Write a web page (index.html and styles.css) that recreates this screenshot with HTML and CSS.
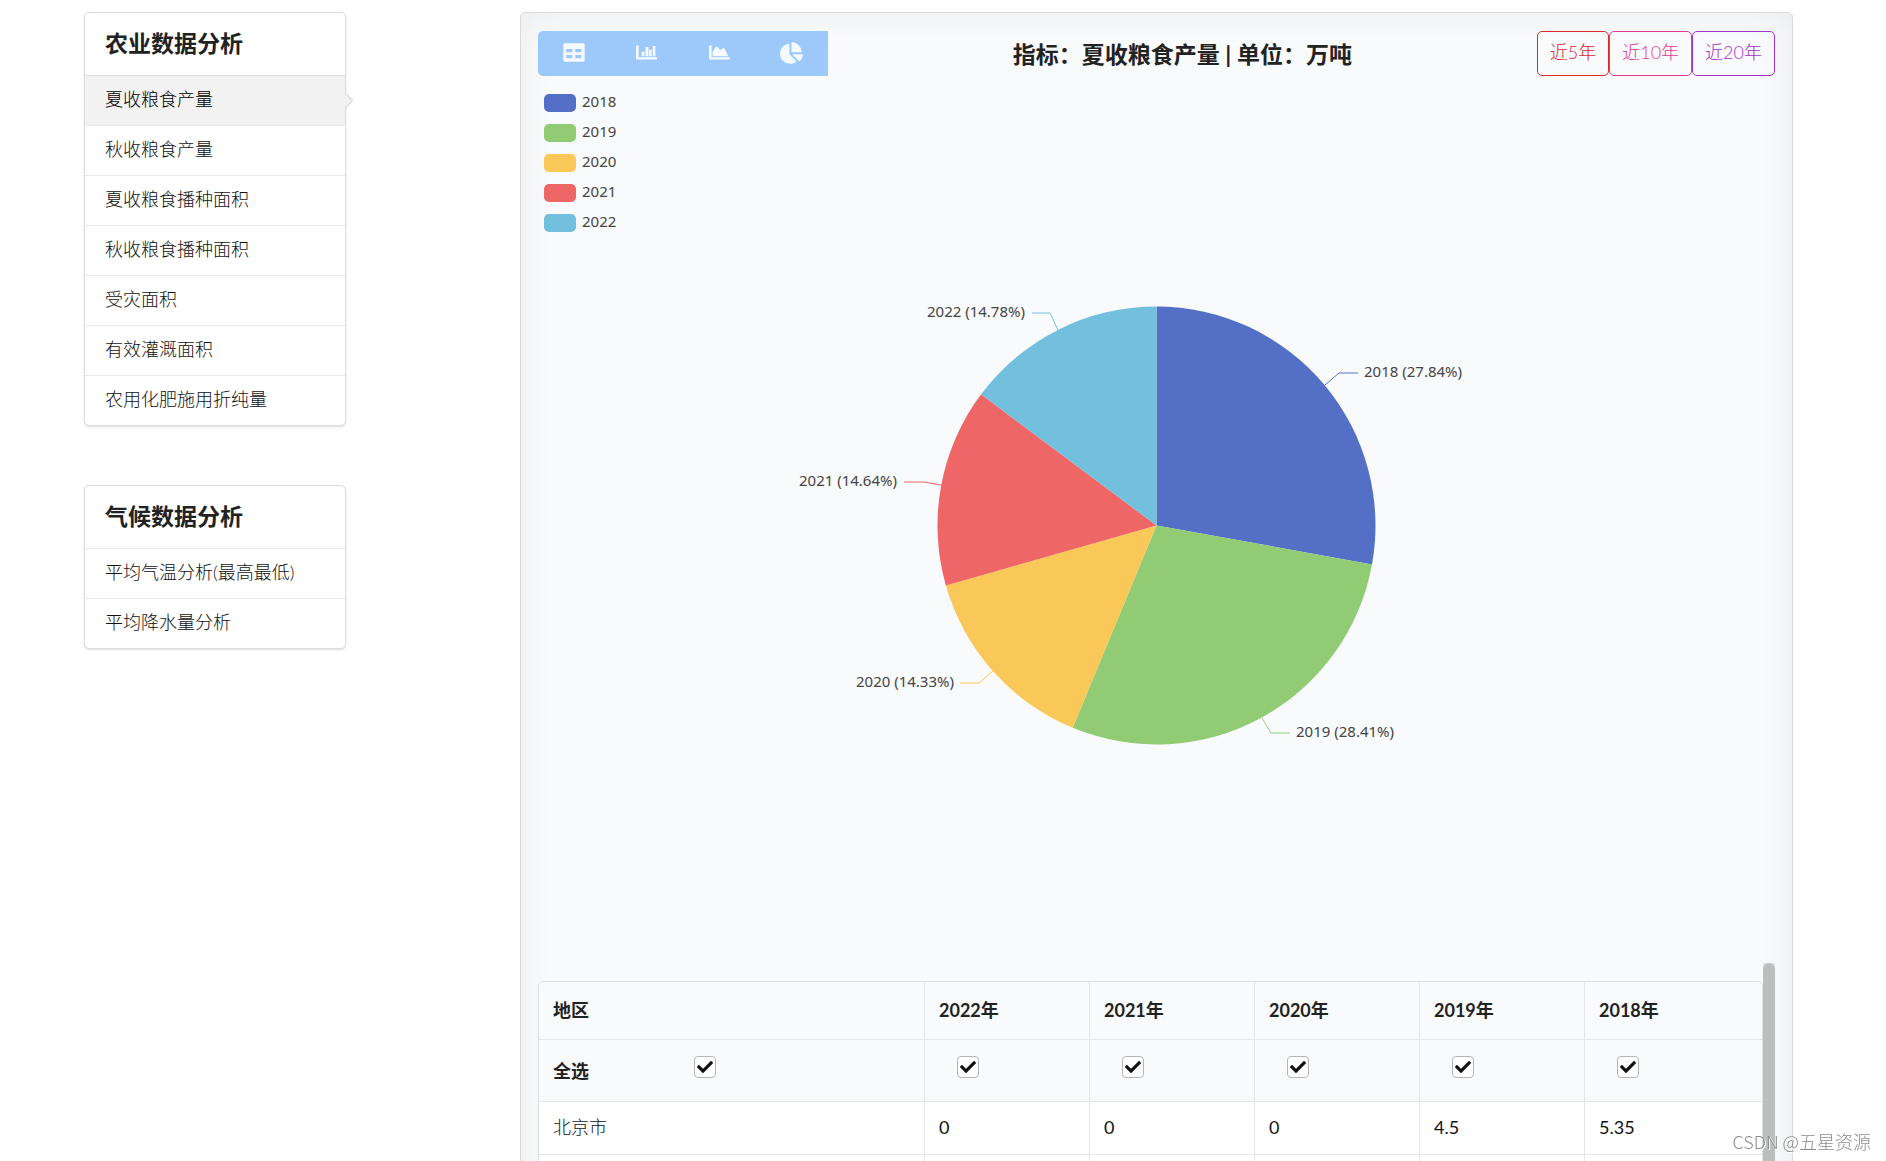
FILE: index.html
```html
<!DOCTYPE html>
<html lang="zh-CN">
<head>
<meta charset="utf-8">
<meta name="viewport" content="width=device-width, initial-scale=1">
<title>农业数据分析</title>
<link rel="stylesheet" href="styles.css">
</head>
<body>
<svg class="defs" aria-hidden="true">
  <symbol id="check" viewBox="0 0 512 512"><path d="M173.898 439.404l-166.4-166.4c-9.997-9.997-9.997-26.206 0-36.204l36.203-36.204c9.997-9.998 26.207-9.998 36.204 0L192 312.69 432.095 72.596c9.997-9.997 26.207-9.997 36.204 0l36.203 36.204c9.997 9.997 9.997 26.206 0 36.204l-294.4 294.401c-9.998 9.997-26.207 9.997-36.204-.001z"/></symbol>
</svg>
<div class="page">
  <aside class="sidebar">
    <nav class="menu">
      <h2 class="menu-title">农业数据分析</h2>
      <a class="menu-item active" href="#">夏收粮食产量</a>
      <a class="menu-item" href="#">秋收粮食产量</a>
      <a class="menu-item" href="#">夏收粮食播种面积</a>
      <a class="menu-item" href="#">秋收粮食播种面积</a>
      <a class="menu-item" href="#">受灾面积</a>
      <a class="menu-item" href="#">有效灌溉面积</a>
      <a class="menu-item" href="#">农用化肥施用折纯量</a>
    </nav>
    <nav class="menu">
      <h2 class="menu-title">气候数据分析</h2>
      <a class="menu-item" href="#">平均气温分析(最高最低)</a>
      <a class="menu-item" href="#">平均降水量分析</a>
    </nav>
  </aside>

  <main class="panel">
    <header class="toolbar">
      <div class="views">
        <button class="view" type="button" aria-label="表格"><svg width="22" height="21" viewBox="0 0 66 63"><path fill-rule="evenodd" d="M5 4h56q4 0 4 4v47q0 4-4 4H5q-4 0-4-4V8q0-4 4-4zM10 21v10h18V21zM37 21v10h18V21zM10 39v10h18V39zM37 39v10h18V39z"/></svg></button>
        <button class="view" type="button" aria-label="柱状图"><svg width="21" height="15" viewBox="0 0 64 45"><path d="M0 1h8v36h56v7H1q-1 0-1-1zM17 20h9v14h-9zM29 6h9v28h-9zM40 14h8v20h-8zM51 3h8v31h-8z"/></svg></button>
        <button class="view" type="button" aria-label="面积图"><svg width="21" height="15" viewBox="0 0 64 45"><path d="M0 1h8v36h56v7H1q-1 0-1-1zM11 34V21L21 5q2-2 4 0l9 10 10-6q2-1 3 1l12 24z"/></svg></button>
        <button class="view" type="button" aria-label="饼图"><svg width="23" height="22" viewBox="0 0 544 512"><path d="M527.79 288H290.5l158.03 158.03c6.04 6.04 15.98 6.53 22.19.68 38.7-36.46 65.32-85.61 73.13-140.86 1.34-9.46-6.51-17.85-16.06-17.85zm-15.83-64.8C503.72 103.74 408.26 8.28 288.8.04 279.68-.59 272 7.1 272 16.24V240h223.77c9.14 0 16.82-7.68 16.19-16.8zM224 288V50.71c0-9.55-8.39-17.4-17.84-16.06C86.99 51.49-4.1 155.6.14 280.37 4.5 408.51 114.83 513.59 243.03 511.98c50.4-.63 96.97-16.87 135.26-44.03 7.9-5.6 8.42-17.23 1.57-24.08L224 288z"/></svg></button>
      </div>
      <h1 class="title">指标：夏收粮食产量 | 单位：万吨</h1>
      <div class="ranges">
        <button class="range red" type="button">近5年</button>
        <button class="range pink" type="button">近10年</button>
        <button class="range purple" type="button">近20年</button>
      </div>
    </header>

    <section class="chart">
      <svg class="pie" viewBox="0 0 1237 875" role="img" aria-label="夏收粮食产量">
        <path class="fill-2018" d="M618.5 437.5V218.500A219 219 0 0 1 834 476.400Z"/>
        <path class="fill-2019" d="M618.5 437.5L834 476.400A219 219 0 0 1 534.700 639.800Z"/>
        <path class="fill-2020" d="M618.5 437.5L534.700 639.800A219 219 0 0 1 407.900 497.500Z"/>
        <path class="fill-2021" d="M618.5 437.5L407.900 497.500A219 219 0 0 1 443.100 306.300Z"/>
        <path class="fill-2022" d="M618.5 437.5L443.100 306.300A219 219 0 0 1 618.500 218.500Z"/>
        <path class="line line-2018" d="M787 297L801 285H820"/>
        <path class="line line-2019" d="M724 630L733 645H752"/>
        <path class="line line-2020" d="M455 583L441 595H422"/>
        <path class="line line-2021" d="M403 397L386 394H366"/>
        <path class="line line-2022" d="M520 242L512 225H494"/>
        <text class="label" x="826" y="289">2018 (27.84%)</text>
        <text class="label" x="758" y="649">2019 (28.41%)</text>
        <text class="label end" x="416" y="599">2020 (14.33%)</text>
        <text class="label end" x="359" y="398">2021 (14.64%)</text>
        <text class="label end" x="487" y="229">2022 (14.78%)</text>
      </svg>
      <ul class="legend">
        <li><span class="swatch bg-2018"></span>2018</li>
        <li><span class="swatch bg-2019"></span>2019</li>
        <li><span class="swatch bg-2020"></span>2020</li>
        <li><span class="swatch bg-2021"></span>2021</li>
        <li><span class="swatch bg-2022"></span>2022</li>
      </ul>
    </section>

    <section class="data">
      <div class="table-wrap">
        <table>
          <colgroup><col><col class="year"><col class="year"><col class="year"><col class="year"><col class="last"></colgroup>
          <thead>
            <tr class="years"><th>地区</th><th>2022年</th><th>2021年</th><th>2020年</th><th>2019年</th><th>2018年</th></tr>
            <tr class="picks">
              <th><div class="all"><label for="all">全选</label><span class="box"><input type="checkbox" id="all" checked><svg><use href="#check"/></svg></span></div></th>
              <th><span class="box"><input type="checkbox" aria-label="2022年" checked><svg><use href="#check"/></svg></span></th>
              <th><span class="box"><input type="checkbox" aria-label="2021年" checked><svg><use href="#check"/></svg></span></th>
              <th><span class="box"><input type="checkbox" aria-label="2020年" checked><svg><use href="#check"/></svg></span></th>
              <th><span class="box"><input type="checkbox" aria-label="2019年" checked><svg><use href="#check"/></svg></span></th>
              <th><span class="box"><input type="checkbox" aria-label="2018年" checked><svg><use href="#check"/></svg></span></th>
            </tr>
          </thead>
          <tbody>
            <tr><td>北京市</td><td>0</td><td>0</td><td>0</td><td>4.5</td><td>5.35</td></tr>
            <tr><td></td><td></td><td></td><td></td><td></td><td></td></tr>
          </tbody>
        </table>
      </div>
      <div class="rail"><div class="thumb"></div></div>
    </section>
  </main>
</div>
<div class="watermark">CSDN @五星资源</div>
</body>
</html>
```
FILE: styles.css
```css
* { box-sizing: border-box; }

body {
  margin: 0;
  background: #fff;
  color: #222;
  font: 18px/24px Lato, "Noto Sans CJK SC", sans-serif;
}

h1, h2, ul { margin: 0; padding: 0; }

button { font: inherit; cursor: pointer; }

.defs { display: none; }

.page {
  display: grid;
  grid-template-columns: 262px minmax(0, 1fr);
  column-gap: 174px;
  height: 100vh;
  padding: 12px 93px 0 84px;
  overflow: hidden;
}

/* Side menus */
.sidebar {
  display: flex;
  flex-direction: column;
  gap: 59px;
}

.menu {
  border: 1px solid #dcdddd;
  border-radius: 5px;
  background: #fff;
  box-shadow: 0 1px 2px rgba(34, 36, 38, .15);
}

.menu-title {
  padding: 15px 20px 17px;
  font-size: 23px;
  line-height: 30px;
  font-weight: 700;
}

.menu-item {
  display: block;
  position: relative;
  height: 50px;
  padding: 11px 20px;
  border-top: 1px solid #e8e9e9;
  color: #111;
  font-weight: 300;
  text-decoration: none;
}

.menu-item.active {
  border-top-color: #dcdddd;
  background: #f2f2f2;
  color: #000;
}

.menu-item.active::after {
  content: "";
  position: absolute;
  top: 50%;
  right: -6px;
  width: 10px;
  height: 10px;
  margin-top: -6px;
  border: 1px solid #d4d4d5;
  border-width: 1px 1px 0 0;
  background: #f2f2f2;
  transform: rotate(45deg);
}

/* Panel */
.panel {
  height: max-content;
  min-height: 100vh;
  padding: 18px 17px;
  border: 1px solid #d9dadb;
  border-radius: 5px;
  background: #f9fafc;
  box-shadow: inset 0 0 36px rgba(34, 36, 38, .07);
}

.toolbar {
  display: flex;
  align-items: stretch;
  height: 45px;
  margin-bottom: 12px;
}

.views {
  display: flex;
  width: 290px;
  border-radius: 5px 0 0 5px;
  background: #9dc9fa;
}

.view {
  display: flex;
  flex: 1;
  align-items: center;
  justify-content: center;
  padding: 0 0 2px;
  border: 0;
  background: none;
  fill: #f5faff;
}

.title {
  flex: 1;
  font-size: 23px;
  line-height: 46px;
  font-weight: 700;
  text-align: center;
}

.ranges { display: flex; }

.range {
  padding: 0 12px 3px;
  border: 1px solid;
  border-radius: 5px;
  background: none;
  font-weight: 300;
}

.red { color: #db2828; }
.pink { color: #e03997; }
.purple { color: #a333c8; }

/* Pie chart */
.chart {
  display: grid;
  height: 875px;
  font: 15px/14px "Noto Sans", sans-serif;
  color: #444;
}

.pie, .legend { grid-area: 1 / 1; }

.pie {
  width: 100%;
  height: 875px;
}

.fill-2018 { fill: #5470c6; }
.fill-2019 { fill: #91cc75; }
.fill-2020 { fill: #fac858; }
.fill-2021 { fill: #ee6666; }
.fill-2022 { fill: #73c0de; }

.line { fill: none; stroke-width: 1; }
.line-2018 { stroke: #5470c6; }
.line-2019 { stroke: #91cc75; }
.line-2020 { stroke: #fac858; }
.line-2021 { stroke: #ee6666; }
.line-2022 { stroke: #73c0de; }

.label { fill: #444; }
.end { text-anchor: end; }

.legend {
  display: flex;
  flex-direction: column;
  gap: 12px;
  padding: 6px;
  list-style: none;
}

.legend li {
  display: flex;
  gap: 6px;
  align-items: flex-start;
  height: 18px;
}

.swatch {
  width: 32px;
  height: 18px;
  border-radius: 5px;
}

.bg-2018 { background: #5470c6; }
.bg-2019 { background: #91cc75; }
.bg-2020 { background: #fac858; }
.bg-2021 { background: #ee6666; }
.bg-2022 { background: #73c0de; }

/* Data table */
.data { display: flex; }

.table-wrap {
  flex: 1;
  min-width: 0;
  padding-top: 18px;
}

table {
  width: 100%;
  table-layout: fixed;
  border: 1px solid #dddedf;
  border-radius: 5px;
  border-collapse: separate;
  border-spacing: 0;
  background: #fff;
}

.year { width: 165px; }
.last { width: 178px; }

th, td {
  height: 53px;
  padding: 0 14px 2px;
  border-top: 1px solid #e5e6e6;
  border-left: 1px solid #e5e6e6;
  text-align: left;
}

th { background: #f9fafb; font-weight: 700; }
td { color: #111; font-weight: 400; }
td:first-child { font-weight: 300; }
th:first-child, td:first-child { border-left: 0; }

.years th {
  height: 57px;
  border-top: 0;
}

.years th:first-child { border-top-left-radius: 5px; }
.years th:last-child { border-top-right-radius: 5px; }

.picks th {
  height: 62px;
  padding-bottom: 8px;
}

.all {
  display: flex;
  gap: 87px;
  align-items: center;
}

.all label { padding-top: 8px; }

.box {
  display: grid;
  width: 22px;
  height: 22px;
  margin-left: 18px;
  place-items: center;
}

.box input, .box svg { grid-area: 1 / 1; }

.box input {
  width: 22px;
  height: 22px;
  margin: 0;
  border: 1px solid #b4b5b5;
  border-radius: 4px;
  background: #fff;
  appearance: none;
}

.box svg {
  width: 16px;
  height: 16px;
  fill: #111;
  pointer-events: none;
}

.rail {
  width: 12px;
  background: #e4e5e6;
}

.thumb {
  height: 100%;
  min-height: 100vh;
  border-radius: 6px;
  background: #bdbfbf;
}

.watermark {
  position: fixed;
  right: 15px;
  bottom: 8px;
  color: #8c8c8c;
  font: 300 18px/24px "Noto Sans CJK SC", sans-serif;
  text-shadow: 1px 1px 0 #fff;
}
```
